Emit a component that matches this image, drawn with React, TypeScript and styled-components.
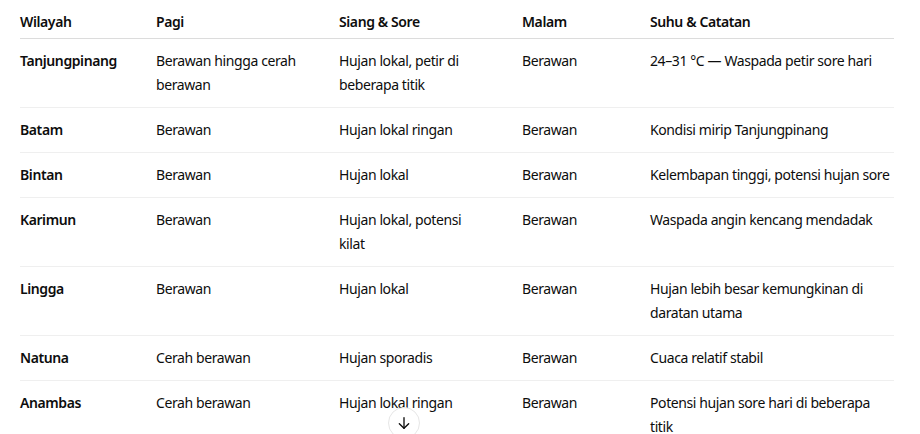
import React from 'react';
import styled, { createGlobalStyle } from 'styled-components';

const GlobalStyle = createGlobalStyle`
  html, body {
    margin: 0;
    padding: 0;
    background: #fff;
  }
  body {
    font-family: 'Noto Sans', 'Open Sans', Arial, sans-serif;
    color: #0d0d0d;
    overflow: hidden;
  }
`;

const Page = styled.div`
  position: relative;
  width: 920px;
  height: 434px;
  overflow: hidden;
  padding: 0 26px 0 20px;
  box-sizing: border-box;
`;

const Table = styled.table`
  width: 100%;
  border-collapse: collapse;
  table-layout: fixed;
  font-size: 14px;
  line-height: 24px;
  letter-spacing: -0.4px;
`;

const HeadCell = styled.th<{ $w?: number }>`
  box-sizing: border-box;
  width: ${({ $w }) => ($w ? `${$w}px` : 'auto')};
  text-align: left;
  font-weight: 600;
  padding: 10px 32px 4px 0;
  border-bottom: 1px solid #dcdcdc;
  vertical-align: top;

  &:last-child {
    padding-right: 0;
  }
`;

const Row = styled.tr`
  border-bottom: 1px solid #efefef;
`;

const Cell = styled.td<{ $strong?: boolean }>`
  box-sizing: border-box;
  padding: 10px 34px 10px 0;
  vertical-align: top;
  font-weight: ${({ $strong }) => ($strong ? 600 : 400)};

  &:last-child {
    padding-right: 0;
  }
`;

const ScrollButton = styled.button`
  position: absolute;
  left: 388px;
  top: 407px;
  width: 32px;
  height: 32px;
  border-radius: 50%;
  border: 1px solid #e6e6e6;
  background: #fff;
  display: flex;
  align-items: center;
  justify-content: center;
  padding: 0;
  color: #0d0d0d;
  cursor: pointer;
`;

const rows = [
  ['Tanjungpinang', 'Berawan hingga cerah berawan', 'Hujan lokal, petir di beberapa titik', 'Berawan', '24–31 °C — Waspada petir sore hari'],
  ['Batam', 'Berawan', 'Hujan lokal ringan', 'Berawan', 'Kondisi mirip Tanjungpinang'],
  ['Bintan', 'Berawan', 'Hujan lokal', 'Berawan', 'Kelembapan tinggi, potensi hujan sore'],
  ['Karimun', 'Berawan', 'Hujan lokal, potensi kilat', 'Berawan', 'Waspada angin kencang mendadak'],
  ['Lingga', 'Berawan', 'Hujan lokal', 'Berawan', 'Hujan lebih besar kemungkinan di daratan utama'],
  ['Natuna', 'Cerah berawan', 'Hujan sporadis', 'Berawan', 'Cuaca relatif stabil'],
  ['Anambas', 'Cerah berawan', 'Hujan lokal ringan', 'Berawan', 'Potensi hujan sore hari di beberapa titik'],
];

const App: React.FC = () => {
  return (
    <Page>
      <GlobalStyle />
      <Table>
        <thead>
          <tr>
            <HeadCell $w={136}>Wilayah</HeadCell>
            <HeadCell $w={183}>Pagi</HeadCell>
            <HeadCell $w={183}>Siang &amp; Sore</HeadCell>
            <HeadCell $w={128}>Malam</HeadCell>
            <HeadCell>Suhu &amp; Catatan</HeadCell>
          </tr>
        </thead>
        <tbody>
          {rows.map((r) => (
            <Row key={r[0]}>
              {r.map((c, i) => (
                <Cell key={i} $strong={i === 0}>{c}</Cell>
              ))}
            </Row>
          ))}
        </tbody>
      </Table>
      <ScrollButton aria-label="Scroll down">
        <svg width="16" height="16" viewBox="0 0 24 24" fill="none" stroke="currentColor" strokeWidth="2" strokeLinecap="round" strokeLinejoin="round">
          <path d="M12 4v16" />
          <path d="M5 13l7 7 7-7" />
        </svg>
      </ScrollButton>
    </Page>
  );
};

export default App;
